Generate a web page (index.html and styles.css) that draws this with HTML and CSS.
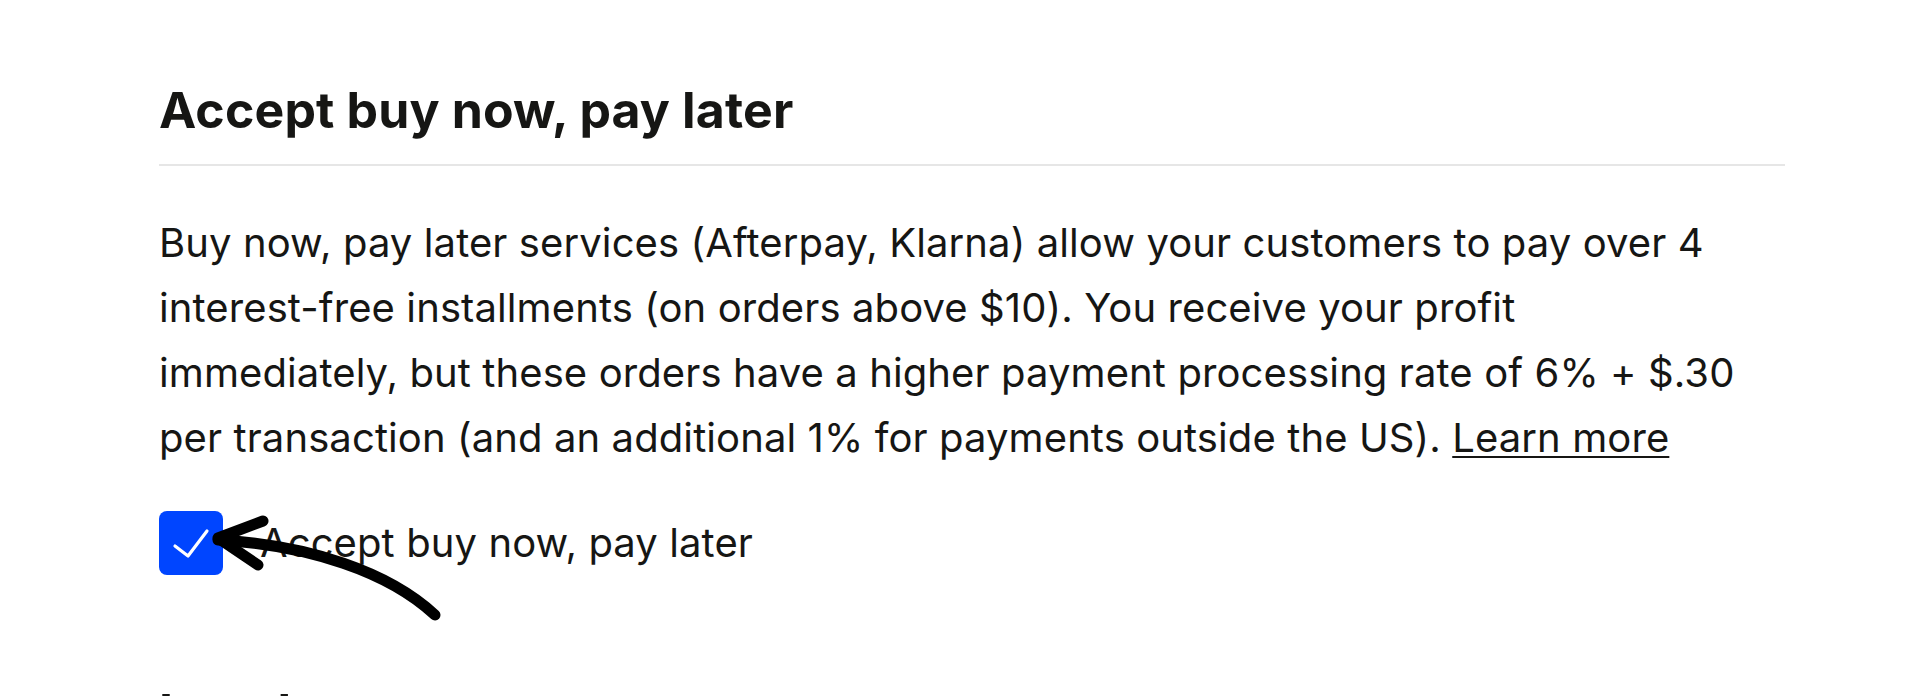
FILE: index.html
```html
<!DOCTYPE html>
<html lang="en">
<head>
    <meta charset="UTF-8">
    <meta name="viewport" content="width=device-width, initial-scale=1.0">
    <title>Payment settings</title>
    <link rel="stylesheet" href="styles.css">
</head>
<body>
    <div class="page">
        <section class="section">
            <h2 class="section-title">Accept buy now, pay later</h2>
            <p class="section-text">
                Buy now, pay later services (Afterpay, Klarna) allow your customers to pay over 4
                interest-free installments (on orders above $10). You receive your profit
                immediately, but these orders have a higher payment processing rate of 6% + $.30
                per transaction (and an additional 1% for payments outside the US).
                <a class="link" href="#">Learn more</a>
            </p>

            <label class="check-row">
                <span class="checkbox">
                    <svg viewBox="0 0 64 64" width="64" height="64">
                        <polyline points="16,35 29,45 48,20" fill="none" stroke="#fff" stroke-width="3.2" stroke-linecap="round" stroke-linejoin="round"/>
                    </svg>
                </span>
                <span class="check-label">Accept buy now, pay later</span>

                <!-- hand drawn arrow pointing at the checkbox -->
                <svg class="arrow" viewBox="0 0 300 120" width="300" height="120">
                    <path d="M276 105 C 230 62, 150 35, 59 30" fill="none" stroke="#000" stroke-width="11" stroke-linecap="round"/>
                    <path d="M104 11 L59 28 L99 55" fill="none" stroke="#000" stroke-width="11" stroke-linecap="round" stroke-linejoin="round"/>
                </svg>
            </label>
        </section>

        <section class="section">
            <h2 class="section-title">Local currency</h2>
        </section>
    </div>
</body>
</html>
```

FILE: styles.css
```css
:root {
    --text-color: #161614;
    --border-color: #e6e6e6;
    --accent-color: #0045ff;
}

body {
    margin: 0;
    background: #ffffff;
    color: var(--text-color);
    font-family: Inter, "Noto Sans", sans-serif;
}

.page {
    padding: 80px 135px 0 159px;
}

.section + .section {
    margin-top: 107px;
}

.section-title {
    margin: 0;
    padding-bottom: 24px;
    border-bottom: 2px solid var(--border-color);
    font-size: 50px;
    line-height: 60px;
    font-weight: 700;
    letter-spacing: 0.15px;
}

.section-text {
    margin: 44px 0 0;
    max-width: 1598px;
    font-size: 40px;
    line-height: 65px;
    letter-spacing: 0.1px;
}

.link {
    color: inherit;
    text-decoration: underline;
    text-decoration-thickness: 2px;
    text-underline-offset: 4px;
}

.check-row {
    position: relative;
    display: flex;
    align-items: center;
    gap: 37px;
    margin-top: 40px;
    font-size: 40px;
    line-height: 65px;
    letter-spacing: 0.1px;
}

.checkbox {
    display: flex;
    width: 64px;
    height: 64px;
    border-radius: 8px;
    background: var(--accent-color);
}

.arrow {
    position: absolute;
    left: 0;
    top: 0;
    overflow: visible;
}
```
